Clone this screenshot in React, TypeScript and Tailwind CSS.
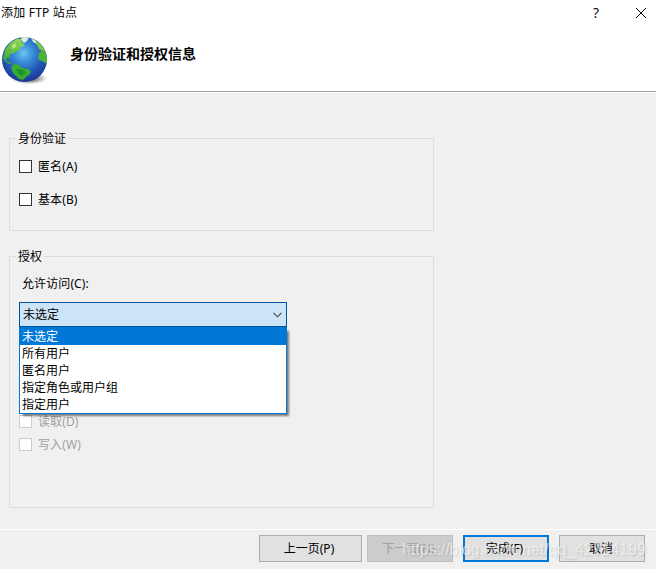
import { useState } from "react";

const accessOptions = ["未选定", "所有用户", "匿名用户", "指定角色或用户组", "指定用户"];

interface CheckRowProps {
  label: string;
  disabled?: boolean;
}

function CheckRow({ label, disabled = false }: CheckRowProps) {
  const [checked, setChecked] = useState(false);

  return (
    <label className={`flex h-4 items-center gap-[6px] ${disabled ? "text-[#a0a0a0]" : "text-black"}`}>
      <input
        type="checkbox"
        checked={checked}
        disabled={disabled}
        onChange={(e) => setChecked(e.target.checked)}
        className={`h-[13px] w-[13px] shrink-0 appearance-none border bg-white ${
          disabled ? "border-[#cccccc]" : "border-[#333333] checked:bg-[#0078d7]"
        }`}
      />
      <span className="pt-0.5 tracking-[0.1px] whitespace-nowrap">{label}</span>
    </label>
  );
}

function GlobeIcon() {
  return (
    <svg className="h-[50px] w-[50px]" viewBox="0 0 50 50">
      <defs>
        <radialGradient id="ocean" cx="0.48" cy="0.36" r="0.66">
          <stop offset="0" stopColor="#6cc6f0" />
          <stop offset="0.3" stopColor="#3a8fd8" />
          <stop offset="0.65" stopColor="#2259b8" />
          <stop offset="1" stopColor="#1a3192" />
        </radialGradient>
        <linearGradient id="land" x1="0.6" y1="0" x2="0.3" y2="1">
          <stop offset="0" stopColor="#8ed655" />
          <stop offset="1" stopColor="#38a62f" />
        </linearGradient>
        <radialGradient id="shade">
          <stop offset="0.3" stopColor="#444" stopOpacity="0.8" />
          <stop offset="1" stopColor="#888" stopOpacity="0" />
        </radialGradient>
        <clipPath id="disc">
          <circle cx="24.5" cy="24.5" r="22.5" />
        </clipPath>
      </defs>
      <ellipse cx="29" cy="43.5" rx="19" ry="6" fill="url(#shade)" />
      <circle cx="24.5" cy="24.5" r="22.5" fill="url(#ocean)" />
      <g clipPath="url(#disc)">
        <path d="M3 24 5 15 10 8 17 4 22 4 21 7 24 9 23 12 20 12 20 15 17 16 14 18 11 19 9 21 10 23 7 23 6 25 9 27 12 29 9 29 5 26Z" fill="url(#land)" />
        <path d="M11 32 14 29 19 30 22 33 28 34 31 36 30 39 26 42 23 45 19 44 16 41 13 38Z" fill="#38ac33" />
        <path d="M16 34 21 34 26 37 22 41 18 39Z" fill="#1f942c" />
        <path d="M34 5 41 9 46 17 42 16 39 14 37 10Z" fill="#79c44b" />
        <path d="M39 18 43 15 48 19 48 28 45 28 42 26 39 25 38 22Z" fill="#4cb23b" />
        <path d="M21 2 29 2 27 6 24 8 22 6Z" fill="#dfeadb" />
        <path d="M31 3 36 6 37 9 33 7Z" fill="#d5ead9" />
        <path d="M12 10 16 8 16 12 12 14Z" fill="#b5e779" />
      </g>
    </svg>
  );
}

export default function App() {
  const [selected, setSelected] = useState(0);

  return (
    <div className="relative flex h-[569px] w-[656px] flex-col overflow-hidden bg-[#f0f0f0] font-['Noto_Sans','Noto_Sans_CJK_SC',sans-serif] text-[12px] leading-4 text-black">
      <header className="h-[92px] shrink-0 border-b border-[#a0a0a0] bg-white">
        <div className="flex h-[25px] items-center justify-between pl-px">
          <h1 className="tracking-[0.2px]">添加 FTP 站点</h1>
          <div className="flex items-center gap-[33px] pr-[9px]">
            <button type="button" aria-label="帮助" className="w-3 text-center font-['Open_Sans',sans-serif] text-[14px] font-medium">
              ?
            </button>
            <button type="button" aria-label="关闭">
              <svg className="h-3 w-3" viewBox="0 0 12 12" fill="none" stroke="black" strokeWidth="1">
                <path d="M1 1 11 11M11 1 1 11" />
              </svg>
            </button>
          </div>
        </div>
        <div className="flex h-[60px] items-center">
          <div className="pt-[10px]">
            <GlobeIcon />
          </div>
          <h2 className="ml-5 pb-1 text-[14px] leading-5 font-bold font-['Noto_Sans_CJK_SC',sans-serif]">身份验证和授权信息</h2>
        </div>
      </header>

      <main className="flex-1 border-t border-white pt-[37px] pl-[9px]">
        <section className="h-[101px] w-[425px]">
          <fieldset className="h-full border border-[#dcdcdc] pl-[9px]">
            <legend className="-ml-[3px] px-0.5">
              <span className="relative top-px">身份验证</span>
            </legend>
            <div className="flex flex-col gap-[17px] pt-3">
              <CheckRow label="匿名(A)" />
              <CheckRow label="基本(B)" />
            </div>
          </fieldset>
        </section>

        <section className="mt-[17px] h-[260px] w-[425px]">
          <fieldset className="h-full border border-[#dcdcdc] pl-[9px]">
            <legend className="-ml-[3px] px-0.5">
              <span className="relative top-px">授权</span>
            </legend>
            <p className="mt-3 ml-[3px] tracking-[0.1px]">允许访问(C):</p>
            <div className="relative mt-[10px] w-[268px]">
              <button
                type="button"
                className="flex h-[25px] w-full items-center justify-between border border-[#005499] bg-[#cce4f7] pr-1 pl-[3px]"
              >
                {accessOptions[selected]}
                <svg className="h-[6px] w-[9px]" viewBox="0 0 9 6" fill="none" stroke="#444" strokeWidth="1.1">
                  <path d="M.5 .8 4.5 4.8 8.5 .8" />
                </svg>
              </button>
              <ul className="absolute top-[25px] left-0 z-10 w-full border border-t-0 border-[#0078d7] bg-white shadow-[3px_3px_2px_-1px_rgba(0,0,0,0.5)]">
                {accessOptions.map((option, i) => (
                  <li
                    key={option}
                    onClick={() => setSelected(i)}
                    className={`pl-0.5 ${i === selected ? "h-[18px] bg-[#0078d7] pt-px leading-[17px] text-white" : "h-[17px] leading-[17px]"}`}
                  >
                    {option}
                  </li>
                ))}
              </ul>
            </div>
            <div className="mt-[86px] flex flex-col gap-[7px]">
              <CheckRow label="读取(D)" disabled />
              <CheckRow label="写入(W)" disabled />
            </div>
          </fieldset>
        </section>
      </main>

      <footer className="flex h-10 shrink-0 items-start border-t border-white pt-[5px] pl-[259px]">
        <button type="button" className="h-[27px] w-[103px] border border-[#adadad] bg-[#e1e1e1] pr-[3px]">
          上一页(P)
        </button>
        <button type="button" disabled className="ml-[5px] h-[27px] w-[86px] border border-[#bfbfbf] bg-[#cccccc] pr-[3px] text-[#a0a0a0]">
          下一页(N)
        </button>
        <button type="button" className="ml-[10px] h-[27px] w-[86px] border-2 border-[#0078d7] bg-[#e1e1e1] pr-[3px]">
          完成(F)
        </button>
        <button type="button" className="ml-[10px] h-[27px] w-[86px] border border-[#adadad] bg-[#e1e1e1] pr-0.5">
          取消
        </button>
      </footer>

      <span className="pointer-events-none absolute top-[540px] left-[402px] font-['Liberation_Sans',sans-serif] text-[16px] leading-5 tracking-[-0.05px] whitespace-nowrap text-white/60 [text-shadow:1px_1px_2px_rgba(0,0,0,0.15)]">
        https://blog.csdn.net/qq_42714199
      </span>
    </div>
  );
}
